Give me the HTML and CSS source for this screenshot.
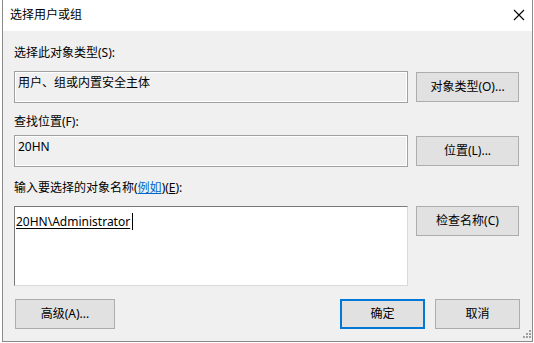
FILE: index.html
```html
<!DOCTYPE html>
<html lang="zh-CN">
<head>
<meta charset="utf-8">
<title>选择用户或组</title>
<link rel="stylesheet" href="styles.css">
</head>
<body>
<div class="window">
  <div class="titlebar">
    <span class="title">选择用户或组</span>
    <span class="close"><svg width="12" height="12" viewBox="0 0 12 12"><path d="M1 1 L11 11 M11 1 L1 11" stroke="#000" stroke-width="1.1" fill="none"/></svg></span>
  </div>
  <div class="content">
    <div class="label l1">选择此对象类型(S):</div>
    <div class="row r1">
      <div class="field static">用户、组或内置安全主体</div>
      <button class="btn side mid">对象类型(O)...</button>
    </div>
    <div class="label l2">查找位置(F):</div>
    <div class="row r2">
      <div class="field static">20HN</div>
      <button class="btn side mid">位置(L)...</button>
    </div>
    <div class="label l3">输入要选择的对象名称(<span class="link">例如</span>)(<u>E</u>):</div>
    <div class="row r3">
      <div class="field edit"><span class="name">20HN\Administrator</span><span class="caret"></span></div>
      <button class="btn side">检查名称(C)</button>
    </div>
    <div class="footer">
      <button class="btn adv">高级(A)...</button>
      <div class="spacer"></div>
      <button class="btn ok">确定</button>
      <button class="btn cancel">取消</button>
    </div>
  </div>
  <svg class="grip" width="12" height="12" viewBox="0 0 12 12">
    <g fill="#a0a0a0">
      <rect x="9" y="1" width="2" height="2"/>
      <rect x="6" y="4" width="2" height="2"/><rect x="9" y="4" width="2" height="2"/>
      <rect x="3" y="7" width="2" height="2"/><rect x="6" y="7" width="2" height="2"/><rect x="9" y="7" width="2" height="2"/>
    </g>
  </svg>
</div>
</body>
</html>
```
FILE: styles.css
```css
html, body {
  margin: 0;
  padding: 0;
  background: #ffffff;
}
body {
  font-family: "Noto Sans", "Noto Sans CJK SC", sans-serif;
  font-size: 12px;
  color: #000;
  width: 534px;
  height: 343px;
  overflow: hidden;
}
.window {
  position: relative;
  margin-left: 2px;
  width: 529px;
  height: 341px;
  border: 1px solid #8a8a8a;
  border-top: none;
  background: #f0f0f0;
  display: flex;
  flex-direction: column;
}
.titlebar {
  height: 31px;
  background: #ffffff;
  display: flex;
  align-items: center;
  justify-content: space-between;
  flex: none;
}
.title {
  margin-left: 7px;
  font-size: 12px;
  line-height: 16px;
  margin-top: -1px;
}
.close {
  display: flex;
  margin-right: 7px;
  margin-top: -1px;
}
.content {
  padding: 14px 12px 0 11px;
  display: flex;
  flex-direction: column;
}
.label {
  line-height: 16px;
  height: 16px;
  white-space: nowrap;
}
.l1 { margin-bottom: 10px; }
.l2 { margin-top: 11px; margin-bottom: 5px; }
.l3 { margin-top: 13px; margin-bottom: 10px; }
.link {
  color: #0066cc;
  text-decoration: underline;
}
.row {
  display: grid;
  grid-template-columns: 394px 103px;
  column-gap: 8px;
  align-items: start;
}
.field {
  box-sizing: border-box;
  line-height: 16px;
  white-space: nowrap;
}
.static {
  height: 32px;
  border: 1px solid #a0a0a0;
  box-shadow: inset 1px 1px 0 #ffffff, inset -1px -1px 0 #ffffff;
  padding: 3px 3px;
}
.edit {
  height: 80px;
  background: #ffffff;
  border-top: 1px solid #7a7a7a;
  border-left: 1px solid #7a7a7a;
  border-right: 1px solid #dadada;
  border-bottom: 1px solid #dadada;
  padding: 7px 1px;
  display: flex;
  align-items: flex-start;
}
.name {
  text-decoration: underline;
  text-underline-offset: 2px;
}
.caret {
  display: inline-block;
  width: 1px;
  height: 17px;
  background: #000;
  margin-left: 2px;
  margin-top: -1px;
}
.btn {
  box-sizing: border-box;
  height: 30px;
  background: #e1e1e1;
  border: 1px solid #adadad;
  font-family: inherit;
  font-size: 12px;
  color: #000;
  padding: 0;
  margin: 0;
  line-height: 16px;
}
.side.mid { margin-top: 1px; }
.footer {
  display: flex;
  margin-top: 13px;
  padding-left: 1px;
}
.adv { width: 100px; }
.spacer { flex: 1; }
.ok {
  width: 85px;
  border: 2px solid #0078d7;
}
.cancel {
  width: 85px;
  margin-left: 10px;
}
.grip {
  position: absolute;
  right: 0;
  bottom: 0;
}
```
